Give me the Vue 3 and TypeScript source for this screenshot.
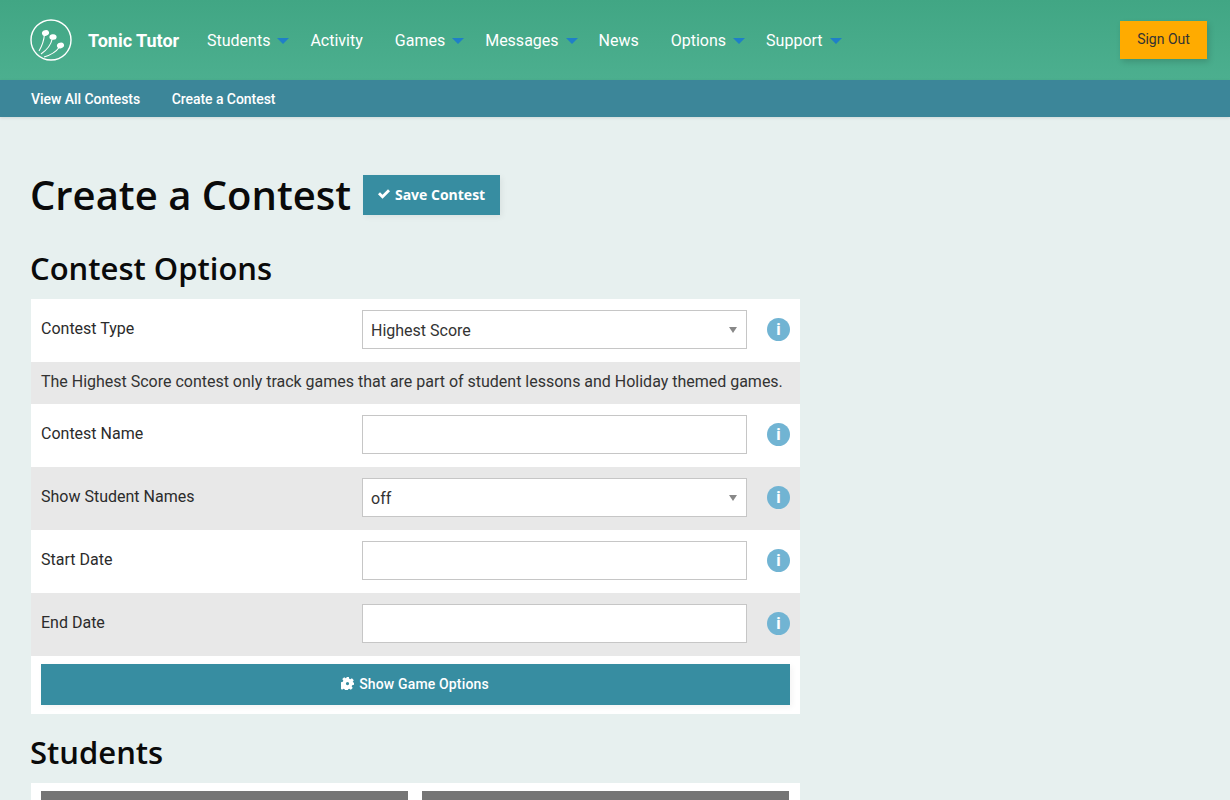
<script setup lang="ts">
interface NavItem { label: string; caret: boolean }
interface Row { label: string; kind: 'select' | 'input'; value?: string; shaded?: boolean }

const nav: NavItem[] = [
  { label: 'Students', caret: true },
  { label: 'Activity', caret: false },
  { label: 'Games', caret: true },
  { label: 'Messages', caret: true },
  { label: 'News', caret: false },
  { label: 'Options', caret: true },
  { label: 'Support', caret: true },
]
const rowsAfter: Row[] = [
  { label: 'Contest Name', kind: 'input' },
  { label: 'Show Student Names', kind: 'select', value: 'off', shaded: true },
  { label: 'Start Date', kind: 'input' },
  { label: 'End Date', kind: 'input', shaded: true },
]
</script>

<template>
  <div class="page">
    <header class="top">
      <svg class="logo" width="42" height="42" viewBox="0 0 42 42" fill="none" stroke="#fff">
        <circle cx="21" cy="21" r="20" stroke-width="1.4" />
        <path d="M9 32 C12 27 14 21 14.500 15" stroke-width="1.1" />
        <path d="M11 35 C17 31 21 26 22.500 19" stroke-width="1.1" />
        <path d="M14 38 C21 36 26 33 29.500 28" stroke-width="1.1" />
        <ellipse cx="15.500" cy="14" rx="3.600" ry="2.800" fill="#fff" stroke="none" transform="rotate(-15 15.500 14)" />
        <ellipse cx="23" cy="18" rx="3.600" ry="2.800" fill="#fff" stroke="none" transform="rotate(5 23 18)" />
        <ellipse cx="30.500" cy="26.500" rx="3.600" ry="2.800" fill="#fff" stroke="none" transform="rotate(-15 30.500 26.500)" />
      </svg>
      <span class="brand">Tonic Tutor</span>
      <nav class="menu">
        <a v-for="n in nav" :key="n.label" class="menu-item" :class="{ 'has-caret': n.caret }">
          {{ n.label }}<i v-if="n.caret" class="caret"></i>
        </a>
      </nav>
      <button class="signout">Sign Out</button>
    </header>
    <div class="sub">
      <a>View All Contests</a>
      <a>Create a Contest</a>
    </div>
    <main class="main">
      <div class="title-row">
        <h1>Create a Contest</h1>
        <button class="save">
          <svg width="12" height="10" viewBox="0 0 12 10"><path d="M0 5.200 L2 3.200 L4.500 5.700 L10 0.200 L12 2.200 L4.500 9.700 Z" fill="#fff" /></svg>
          Save Contest
        </button>
      </div>
      <h2>Contest Options</h2>
      <section class="card">
        <div class="row">
          <label>Contest Type</label>
          <div class="field select">Highest Score</div>
          <span class="info">i</span>
        </div>
        <div class="note">The Highest Score contest only track games that are part of student lessons and Holiday themed games.</div>
        <div v-for="r in rowsAfter" :key="r.label" class="row" :class="{ shaded: r.shaded }">
          <label>{{ r.label }}</label>
          <div class="field" :class="{ select: r.kind === 'select' }">{{ r.value }}</div>
          <span class="info">i</span>
        </div>
        <div class="action">
          <button class="show">
            <svg width="13" height="13" viewBox="0 0 24 24" fill="#fff">
              <path fill-rule="evenodd" d="M9.500 0h5l.7 3.400 2.100.9 2.900-1.900 3.400 3.400-1.900 2.900.9 2.100L24 9.500v5l-3.400.7-.9 2.100 1.900 2.900-3.400 3.400-2.900-1.900-2.100.9-.7 2.400h-5l-.7-2.400-2.100-.9-2.900 1.900-3.400-3.400 1.900-2.900-.9-2.100L0 14.500v-5l3.400-.7.9-2.100-1.900-2.900 3.400-3.400 2.900 1.900 2.100-.9zM12 9a3 3 0 1 0 0 6 3 3 0 0 0 0-6z" />
            </svg>
            Show Game Options
          </button>
        </div>
      </section>
      <h2 class="students">Students</h2>
      <section class="card students-card">
        <div class="col-head"></div>
        <div class="col-head"></div>
      </section>
    </main>
  </div>
</template>

<style>
html, body { margin: 0; height: 800px; overflow: hidden; background: #e7f0ef; }
</style>

<style scoped>
.page { font-family: Roboto, sans-serif; color: #2b2b2b; height: 800px; overflow: hidden; background: #e7f0ef; }
.top {
  height: 80px; display: flex; align-items: center; padding: 0 23px 0 30px; box-sizing: border-box;
  background: linear-gradient(180deg, #41a684, #4caf8f);
}
.logo { flex: none; }
.brand { margin-left: 16px; width: 119px; font-size: 18px; font-weight: 700; color: #fff; }
.menu { display: flex; flex: 1; font-size: 16px; color: #fff; }
.menu-item { display: flex; align-items: center; margin-right: 32px; }
.menu-item.has-caret { margin-right: 21px; }
.caret {
  width: 0; height: 0; margin-left: 7px; margin-top: 2px;
  border-left: 6px solid transparent; border-right: 6px solid transparent; border-top: 6px solid #1f7fc8;
}
.signout {
  width: 87px; height: 38px; border: 0; padding: 0 0 2px; background: #ffab00; color: #333; font: 14px Roboto, sans-serif;
  box-shadow: 2px 3px 6px rgba(0,0,0,.15);
}
.sub {
  height: 37px; background: #3c8699; display: flex; align-items: center; padding-left: 31px; gap: 31.500px;
  font-size: 14px; font-weight: 500; color: #fff; letter-spacing: -0.05px; box-shadow: 0 1px 3px rgba(0,0,0,.1);
}
.main { padding: 58px 0 0 31px; width: 769px; }
.title-row { display: flex; align-items: center; height: 40px; }
h1 { margin: 0 0 0 -1px; font: 600 40px/40px "Open Sans", sans-serif; color: #0a0a0a; }
.save {
  margin-left: 12px; height: 40px; width: 137px; border: 0; padding: 0 0 2px; background: #378da1; color: #fff;
  font: 700 14px "Open Sans", sans-serif; display: flex; align-items: center; justify-content: center; gap: 5px;
  box-shadow: 2px 2px 6px rgba(0,0,0,.06);
}
h2 { margin: 34px 0 12px -1px; font: 600 31px/38px "Open Sans", sans-serif; color: #0a0a0a; }
h2.students { margin: 19px 0 12px -1px; }
.card { background: #fff; }
.row { height: 63px; display: flex; align-items: center; padding: 0 10px; box-sizing: border-box; font-size: 16px; }
.row label { width: 321px; position: relative; top: -2px; }
.shaded, .note { background: #e8e8e8; }
.field {
  width: 385px; height: 39px; box-sizing: border-box; border: 1px solid #c6c6c6; background: #fff;
  padding-left: 8px; line-height: 39px; color: #333; position: relative; top: -1px;
}
.select::after {
  content: ""; position: absolute; right: 9px; top: 16px; width: 0; height: 0;
  border-left: 4px solid transparent; border-right: 4px solid transparent; border-top: 6px solid #888;
}
.info {
  width: 23px; height: 23px; border-radius: 50%; background: #71b4d3; color: #fff; margin-left: 20px;
  font: 700 16px/23px "Open Sans", sans-serif; text-align: center; position: relative; top: -1px;
}
.note { height: 42px; line-height: 39px; padding-left: 10px; font-size: 16px; letter-spacing: -0.01px; color: #333; white-space: nowrap; }
.action { height: 58px; padding: 8px 10px 0; box-sizing: border-box; }
.show {
  width: 749px; height: 41px; border: 0; background: #378da1; color: #fff; font: 500 14px/38px Roboto, sans-serif;
  letter-spacing: .15px; padding: 0 1px 2px 0;
  display: flex; align-items: center; justify-content: center; gap: 5px; box-shadow: 2px 2px 6px rgba(0,0,0,.05);
}
.students-card { display: flex; gap: 14px; padding: 8px 10px 0; height: 60px; box-sizing: border-box; }
.col-head { width: 367px; height: 40px; background: #757575; }
</style>
